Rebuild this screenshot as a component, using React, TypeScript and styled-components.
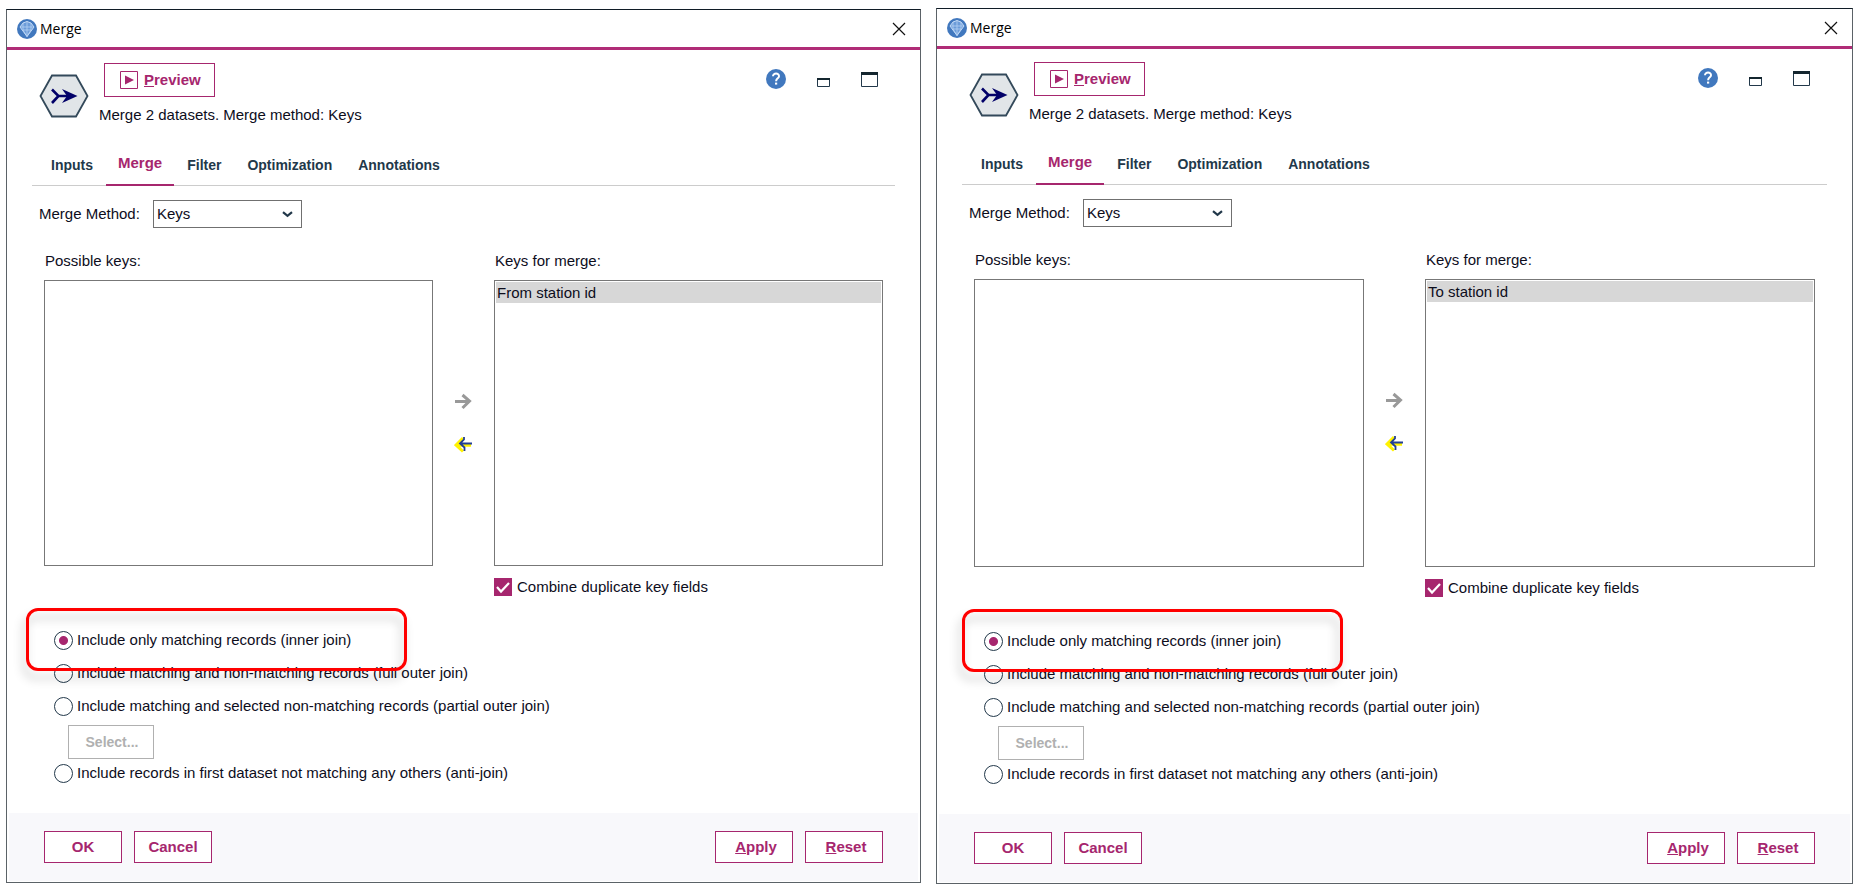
import React, { useId, useState } from 'react';
import styled, { createGlobalStyle } from 'styled-components';

const accent = '#a6266e';
const ink = '#0d0d1c';
const navy = '#22384a';

const GlobalStyle = createGlobalStyle`
  *, *::before, *::after { box-sizing: border-box; }
  body {
    margin: 0;
    background: #fff;
    color: ${ink};
    font: 15px/20px "Liberation Sans", Arial, sans-serif;
  }
  button, select, input { font: inherit; color: inherit; margin: 0; }
`;

const Page = styled.main`
  display: grid;
  grid-template-columns: 915fr 917fr;
  gap: 15px;
  align-items: center;
  padding: 8px 4px 4px 6px;
`;

const Window = styled.section`
  display: flex;
  flex-direction: column;
  min-width: 0;
  background: #fff;
  border: 1px solid #5b6267;
  border-top-color: #101c26;
`;

const TitleBar = styled.header`
  display: flex;
  align-items: center;
  gap: 3px;
  height: 40px;
  padding: 0 14px 0 10px;
  border-bottom: 3px solid #b02c77;
`;

const Title = styled.h1`
  flex: 1;
  margin: 0;
  font: 400 14px/20px "Open Sans", "Noto Sans", sans-serif;
  color: #000;
`;

const IconButton = styled.button`
  display: flex;
  align-items: center;
  justify-content: center;
  padding: 0;
  border: 0;
  background: none;
`;

const NodeHeader = styled.div`
  display: flex;
  padding: 13px 42px 0 32px;
`;

const NodeIcon = styled.svg`
  margin-top: 11px;
`;

const NodeSummary = styled.div`
  flex: 1;
  padding-left: 10px;
`;

const Description = styled.p`
  margin: 8px 0 0;
`;

const WindowTools = styled.div`
  display: flex;
  align-items: flex-end;
  gap: 31px;
  height: 26px;
`;

const ActionButton = styled.button<{ $mnemonic?: boolean }>`
  min-width: 78px;
  height: 32px;
  padding: 0 0 0 ${(p) => (p.$mnemonic ? '4px' : '0')};
  border: 1px solid ${accent};
  background: #fff;
  color: ${accent};
  font-weight: 700;
`;

const PreviewButton = styled(ActionButton)`
  display: flex;
  align-items: center;
  gap: 6px;
  height: 34px;
  margin-left: 5px;
  padding: 0 13px 0 15px;
`;

const SelectButton = styled(ActionButton)`
  width: 86px;
  height: 34px;
  margin: 9px 0 4px 14px;
  padding-left: 2px;
  border-color: #b0b0b0;
  color: #b0b0b0;
  font-size: 14px;
`;

const Tabs = styled.nav`
  display: flex;
  height: 41px;
  margin: 20px 25px 0;
  padding-left: 6px;
  border-bottom: 1px solid #ccc;
`;

const Tab = styled.button<{ $active: boolean }>`
  height: 41px;
  padding: ${(p) => (p.$active ? '0 12px 4px' : '0 13px')};
  border: 0;
  border-bottom: 2px solid ${(p) => (p.$active ? accent : 'transparent')};
  background: none;
  color: ${(p) => (p.$active ? accent : navy)};
  font-size: ${(p) => (p.$active ? '15px' : '14px')};
  font-weight: 700;
`;

const MethodRow = styled.div`
  display: flex;
  align-items: center;
  padding: 14px 32px 0;
`;

const MethodLabel = styled.label`
  width: 114px;
`;

const SelectBox = styled.div`
  position: relative;
  width: 149px;
`;

const MethodSelect = styled.select`
  display: block;
  width: 100%;
  height: 28px;
  padding: 0 28px 0 3px;
  border: 1px solid #707070;
  border-radius: 0;
  background: #fff;
  appearance: none;
`;

const Chevron = styled.svg`
  position: absolute;
  right: 9px;
  top: 11px;
  pointer-events: none;
`;

const KeysArea = styled.div`
  display: flex;
  padding: 23px 37px 0;
`;

const KeyColumn = styled.div`
  flex: 1;
  min-width: 0;
`;

const ListLabel = styled.div`
  padding: 0 0 9px 1px;
`;

const ListBox = styled.ul<{ $height: number }>`
  height: ${(p) => p.$height}px;
  margin: 0;
  padding: 1px;
  border: 1px solid #777;
  list-style: none;
`;

const ListItem = styled.li`
  height: 21px;
  padding-left: 1px;
  background: #d7d7d7;
  line-height: 22px;
`;

const Movers = styled.div`
  display: flex;
  flex-direction: column;
  align-items: center;
  gap: 23px;
  width: 61px;
  padding-top: 140px;
`;

const CheckLabel = styled.label`
  display: flex;
  align-items: center;
  gap: 5px;
  margin-top: 11px;
`;

const CheckBox = styled.input`
  width: 18px;
  height: 18px;
  appearance: none;
  background: ${accent};

  &:not(:checked) {
    background: #fff;
    border: 1px solid ${accent};
  }
`;

const CheckHolder = styled.span`
  display: flex;
  position: relative;

  svg {
    position: absolute;
    inset: 0;
    pointer-events: none;
  }
`;

const JoinOptions = styled.div`
  position: relative;
  display: flex;
  flex-direction: column;
  align-items: flex-start;
  padding: 33px 47px 30px;
`;

const RadioLabel = styled.label`
  display: flex;
  align-items: center;
  gap: 4px;
  height: 20px;

  & + & {
    margin-top: 13px;
  }
`;

const Radio = styled.input`
  width: 19px;
  height: 19px;
  border: 1px solid ${navy};
  border-radius: 50%;
  appearance: none;
  background: #fff;

  &:checked {
    background: radial-gradient(circle, ${accent} 4px, #fff 5px);
  }
`;

const Highlight = styled.div<{ $left: number }>`
  position: absolute;
  top: 11px;
  left: ${(p) => p.$left}px;
  width: 381px;
  height: 63px;
  border: 3px solid #f00;
  border-radius: 12px;
  filter: drop-shadow(-3px 8px 5px rgba(0, 0, 0, 0.22));
  pointer-events: none;
`;

const Footer = styled.footer`
  display: flex;
  gap: 12px;
  margin: 0 2px 1px;
  padding: 18px 35px;
  background: #f8f8fb;
`;

const Spacer = styled.span`
  flex: 1;
`;

function AppLogo() {
  return (
    <svg width="20" height="20" viewBox="0 0 20 20" aria-hidden="true">
      <circle cx="10" cy="10" r="10" fill="#4178be" />
      <path d="M6 4l4-1.500L14 4l3 4-7 9.500L3 8z" fill="#6c9cd9" stroke="#c6dcf7" />
      <path d="M3 8h14M10 2.500v15M6 4v7l4 6.500 4-6.500V4M6 11h8" fill="none" stroke="#b4d0f2" strokeWidth=".8" />
    </svg>
  );
}

function MergeNodeIcon() {
  return (
    <NodeIcon width="50" height="44" viewBox="0 0 50 44" aria-hidden="true">
      <path d="M1.500 22L13 1.500h24L48.500 22 37 42.500H13z" fill="#e1e5e8" stroke="#33495a" strokeWidth="1.800" />
      <path d="M13 15.500l6.500 6.500-6.500 7M19 22h13" fill="none" stroke="#020068" strokeWidth="2.600" />
      <path d="M38.500 22L23 15l5 7-5 7z" fill="#020068" />
    </NodeIcon>
  );
}

interface DialogProps {
  keyField: string;
  listHeight: number;
  highlightLeft: number;
}

const tabs = ['Inputs', 'Merge', 'Filter', 'Optimization', 'Annotations'];

function MergeDialog({ keyField, listHeight, highlightLeft }: DialogProps) {
  const id = useId();
  const [tab, setTab] = useState('Merge');
  const [join, setJoin] = useState('inner');
  const [combine, setCombine] = useState(true);

  const radio = (value: string, text: string) => (
    <RadioLabel>
      <Radio type="radio" name={id + 'join'} checked={join === value} onChange={() => setJoin(value)} />
      {text}
    </RadioLabel>
  );

  return (
    <Window>
      <TitleBar>
        <AppLogo />
        <Title>Merge</Title>
        <IconButton type="button" aria-label="Close">
          <svg width="14" height="14" viewBox="0 0 14 14">
            <path d="M1 1l12 12M13 1L1 13" stroke="#111" strokeWidth="1.200" />
          </svg>
        </IconButton>
      </TitleBar>

      <NodeHeader>
        <MergeNodeIcon />
        <NodeSummary>
          <PreviewButton type="button">
            <svg width="18" height="18" viewBox="0 0 18 18" aria-hidden="true">
              <path d="M.5.5h17v17H.5z" fill="#fff" stroke={accent} />
              <path d="M5 4.500l9 4.500-9 4.500z" fill={accent} />
            </svg>
            <span><u>P</u>review</span>
          </PreviewButton>
          <Description>Merge 2 datasets. Merge method: Keys</Description>
        </NodeSummary>
        <WindowTools>
          <IconButton type="button" aria-label="Help">
            <svg width="20" height="20" viewBox="0 0 20 20">
              <circle cx="10" cy="10" r="10" fill="#4178be" />
              <path d="M7 7.300C7 3.600 13.200 3.800 13 7.200c-.1 2.200-2.900 2.100-2.900 5" fill="none" stroke="#fff" strokeWidth="2" />
              <path d="M9 13.600h2.200v2H9z" fill="#fff" />
            </svg>
          </IconButton>
          <IconButton type="button" aria-label="Minimize">
            <svg width="13" height="11" viewBox="0 0 13 11">
              <path d="M.5.500h12v8H.5z" fill="#fff" stroke={navy} />
              <path d="M0 0h13v2H0z" fill="#14262f" />
            </svg>
          </IconButton>
          <IconButton type="button" aria-label="Maximize">
            <svg width="17" height="17" viewBox="0 0 17 17">
              <path d="M.5.500h16v14H.5z" fill="#fff" stroke={navy} />
              <path d="M0 0h17v3H0z" fill="#14262f" />
            </svg>
          </IconButton>
        </WindowTools>
      </NodeHeader>

      <Tabs>
        {tabs.map((name) => (
          <Tab key={name} type="button" $active={tab === name} onClick={() => setTab(name)}>
            {name}
          </Tab>
        ))}
      </Tabs>

      <MethodRow>
        <MethodLabel htmlFor={id + 'method'}>Merge Method:</MethodLabel>
        <SelectBox>
          <MethodSelect id={id + 'method'} defaultValue="Keys">
            <option>Keys</option>
          </MethodSelect>
          <Chevron width="11" height="7" viewBox="0 0 11 7" aria-hidden="true">
            <path d="M1 1.200l4.500 3.600L10 1.200" fill="none" stroke={navy} strokeWidth="2.200" />
          </Chevron>
        </SelectBox>
      </MethodRow>

      <KeysArea>
        <KeyColumn>
          <ListLabel id={id + 'possible'}>Possible keys:</ListLabel>
          <ListBox $height={listHeight} role="listbox" aria-labelledby={id + 'possible'} />
        </KeyColumn>
        <Movers>
          <IconButton type="button" aria-label="Add key" disabled>
            <svg width="20" height="20" viewBox="0 0 20 20">
              <path d="M1 10.500h14M8.500 4l7 6-7 7" fill="none" stroke="#999" strokeWidth="3" />
            </svg>
          </IconButton>
          <IconButton type="button" aria-label="Remove key">
            <svg width="20" height="20" viewBox="0 0 20 20">
              <path d="M17 11.200H3M9 4l-7 7 7 6.500" fill="none" stroke="#fff200" strokeWidth="3" />
              <path d="M18 9.500H6M10 3v2.500l-4 4 4.500 4V17" fill="none" stroke="#233f94" strokeWidth="1.800" />
            </svg>
          </IconButton>
        </Movers>
        <KeyColumn>
          <ListLabel id={id + 'merge'}>Keys for merge:</ListLabel>
          <ListBox $height={listHeight} role="listbox" aria-labelledby={id + 'merge'}>
            <ListItem role="option" aria-selected="true">{keyField}</ListItem>
          </ListBox>
          <CheckLabel>
            <CheckHolder>
              <CheckBox type="checkbox" checked={combine} onChange={(e) => setCombine(e.target.checked)} />
              <svg width="18" height="18" viewBox="0 0 18 18" aria-hidden="true">
                <path d="M3 9l4 4.500L15 5" fill="none" stroke="#fff" strokeWidth="2.200" />
              </svg>
            </CheckHolder>
            Combine duplicate key fields
          </CheckLabel>
        </KeyColumn>
      </KeysArea>

      <JoinOptions role="radiogroup" aria-label="Join type">
        {radio('inner', 'Include only matching records (inner join)')}
        {radio('full', 'Include matching and non-matching records (full outer join)')}
        {radio('partial', 'Include matching and selected non-matching records (partial outer join)')}
        <SelectButton type="button" disabled>Select...</SelectButton>
        {radio('anti', 'Include records in first dataset not matching any others (anti-join)')}
        <Highlight $left={highlightLeft} />
      </JoinOptions>

      <Footer>
        <ActionButton type="button">OK</ActionButton>
        <ActionButton type="button">Cancel</ActionButton>
        <Spacer />
        <ActionButton type="button" $mnemonic><span><u>A</u>pply</span></ActionButton>
        <ActionButton type="button" $mnemonic><span><u>R</u>eset</span></ActionButton>
      </Footer>
    </Window>
  );
}

export default function App() {
  return (
    <>
      <GlobalStyle />
      <Page>
        <MergeDialog keyField="From station id" listHeight={286} highlightLeft={19} />
        <MergeDialog keyField="To station id" listHeight={288} highlightLeft={25} />
      </Page>
    </>
  );
}
